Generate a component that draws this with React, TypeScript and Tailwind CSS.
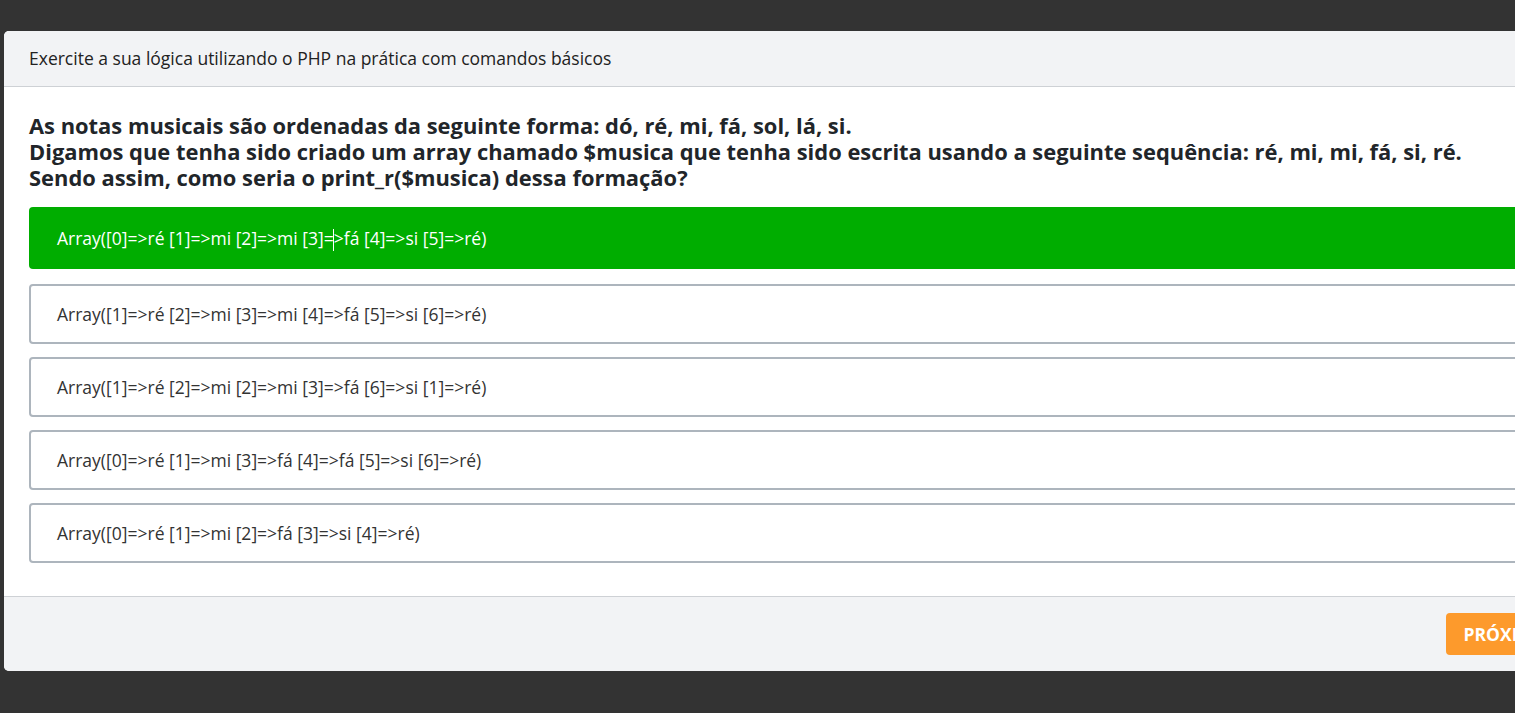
import React from 'react';

const options = [
  'Array([0]=>ré [1]=>mi [2]=>mi [3]=>fá [4]=>si [5]=>ré)',
  'Array([1]=>ré [2]=>mi [3]=>mi [4]=>fá [5]=>si [6]=>ré)',
  'Array([1]=>ré [2]=>mi [2]=>mi [3]=>fá [6]=>si [1]=>ré)',
  'Array([0]=>ré [1]=>mi [3]=>fá [4]=>fá [5]=>si [6]=>ré)',
  'Array([0]=>ré [1]=>mi [2]=>fá [3]=>si [4]=>ré)',
];

export default function App() {
  return (
    <div
      className="h-[713px] w-full overflow-hidden bg-[#333333] pt-[31px]"
      style={{ fontFamily: '"Open Sans", "Noto Sans", sans-serif' }}
    >
      <div className="ml-1 w-[1575px] rounded-[5px] bg-white overflow-hidden">
        {/* Header */}
        <div className="h-[56px] flex items-center px-[25px] bg-[#f2f3f5] border-b border-[#ced1d5]">
          <span className="text-[17.5px] text-[#222]">
            Exercite a sua lógica utilizando o PHP na prática com comandos básicos
          </span>
        </div>

        {/* Body */}
        <div className="px-[25px] pt-[26px] pb-[33px]">
          <h2 className="text-[21.9px] leading-[26px] font-bold text-[#212529] mb-[16px]">
            As notas musicais são ordenadas da seguinte forma: dó, ré, mi, fá, sol, lá, si.
            <br />
            Digamos que tenha sido criado um array chamado $musica que tenha sido escrita usando a seguinte sequência: ré, mi, mi, fá, si, ré.
            <br />
            Sendo assim, como seria o print_r($musica) dessa formação?
          </h2>

          <div className="flex flex-col">
            {options.map((opt, i) =>
              i === 0 ? (
                <div
                  key={i}
                  className="relative h-[62px] mb-[15px] rounded-[4px] bg-[#00ad00] flex items-center pl-[28px] text-[17.5px] text-white"
                >
                  {opt}
                  <span className="absolute left-[304px] top-[22px] h-[22px] w-px bg-white" />
                </div>
              ) : (
                <div
                  key={i}
                  className="h-[60px] mb-[13px] last:mb-0 rounded-[4px] border-2 border-[#adb5bd] bg-white flex items-center pl-[26px] text-[17.5px] text-[#333]"
                >
                  {opt}
                </div>
              )
            )}
          </div>
        </div>

        {/* Footer */}
        <div className="flex justify-end py-[16px] pr-[16px] bg-[#f2f3f5] border-t border-[#ced1d5]">
          <button className="h-[42px] px-[17px] rounded-[4px] bg-[#fd9a2c] text-white text-[17.5px] font-bold">
            PRÓXIMA
          </button>
        </div>
      </div>
    </div>
  );
}
